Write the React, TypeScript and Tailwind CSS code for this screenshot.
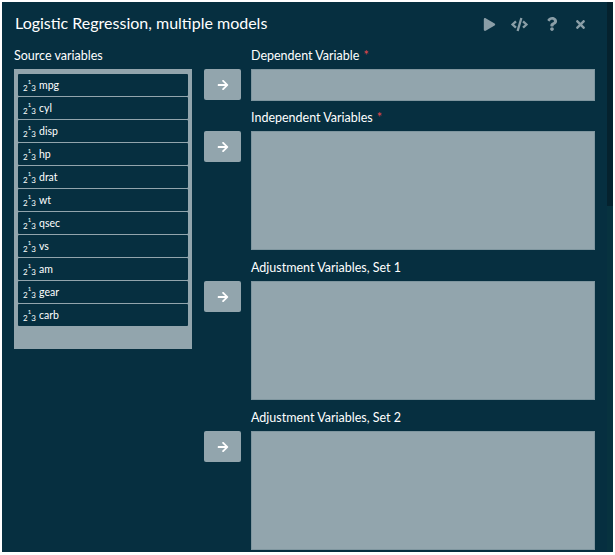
import { FaArrowRight, FaCode, FaPlay, FaQuestion, FaTimes } from 'react-icons/fa'

const variables = ['mpg', 'cyl', 'disp', 'hp', 'drat', 'wt', 'qsec', 'vs', 'am', 'gear', 'carb']

const fields = [
  { label: 'Dependent Variable', required: true, box: 'h-[32px]', gap: 'mt-0' },
  { label: 'Independent Variables', required: true, box: 'h-[119px]', gap: 'mt-[7px]' },
  { label: 'Adjustment Variables, Set 1', required: false, box: 'h-[119px]', gap: 'mt-[8px]' },
  { label: 'Adjustment Variables, Set 2', required: false, box: 'h-[119px]', gap: 'mt-[8px]' },
]

function NumericIcon() {
  return (
    <span className="flex h-[13px] w-[13px] shrink-0 justify-between text-[8px] leading-none">
      <span className="self-end">2</span>
      <span className="self-start text-[6px]">1</span>
      <span className="self-end">3</span>
    </span>
  )
}

function ArrowButton() {
  return (
    <button className="flex h-[31px] w-[37px] items-center justify-center rounded-[2px] bg-[#92a5ad] text-white">
      <FaArrowRight size={12} />
    </button>
  )
}

export default function App() {
  return (
    <div className="h-[555px] w-[615px] overflow-hidden bg-white pl-[2px] pt-[2px] font-['Lato',sans-serif]">
      <div className="flex h-[550px] w-[611px] bg-[#062f40] text-white">
        <div className="w-[605px] shrink-0">
          <div className="flex h-[44px] items-center justify-between pl-[13px] pr-[20px]">
            <h1 className="pb-[2px] text-[16px] leading-none">Logistic Regression, multiple models</h1>
            <div className="flex items-center text-[#8a9ea7]">
              <FaPlay size={13} />
              <FaCode size={17} className="ml-[15px]" />
              <FaQuestion size={14} className="ml-[17px]" />
              <FaTimes size={13} className="ml-[15px]" />
            </div>
          </div>

          <div className="flex pl-[12px]">
            <div className="w-[178px] shrink-0">
              <div className="h-[23px] pt-[1px] text-[12.5px] leading-[18px]">Source variables</div>
              <div className="flex h-[280px] flex-col gap-[1px] bg-[#92a5ad] px-[4px] pt-[5px]">
                {variables.map((name) => (
                  <div
                    key={name}
                    className="flex h-[22px] items-center gap-[3px] rounded-[1px] bg-[#062f40] pl-[5px] pt-[1px] text-[10.5px]"
                  >
                    <NumericIcon />
                    <span>{name}</span>
                  </div>
                ))}
              </div>
            </div>

            <div className="ml-[12px] flex flex-col">
              {fields.map((field) => (
                <div key={field.label} className={`flex items-end ${field.gap}`}>
                  <div className="flex w-[47px] shrink-0 flex-col self-stretch pt-[23px]">
                    <ArrowButton />
                  </div>
                  <div className="w-[344px]">
                    <div className="h-[23px] pt-[1px] text-[12.5px] leading-[18px]">
                      {field.label}
                      {field.required && <span className="ml-[4px] text-[#e5484d]">*</span>}
                    </div>
                    <div className={`${field.box} border border-[#7f969f] bg-[#92a5ad]`} />
                  </div>
                </div>
              ))}
            </div>
          </div>
        </div>
        <div className="h-full flex-1 bg-[#07323f]">
          <div className="h-[204px] bg-[#05222e]" />
        </div>
      </div>
    </div>
  )
}
